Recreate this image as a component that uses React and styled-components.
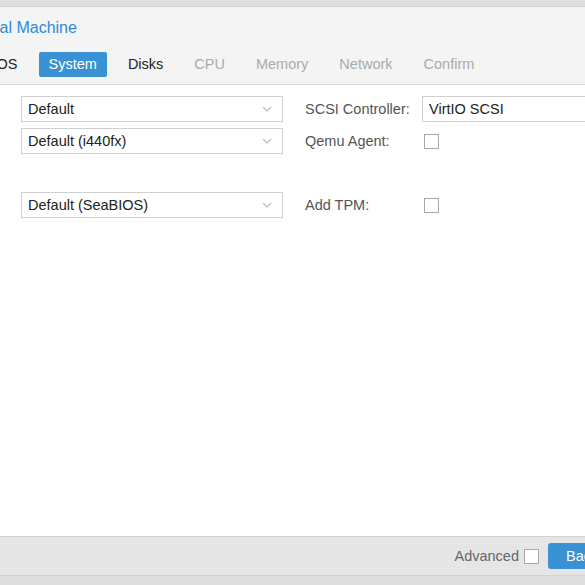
import React from "react"
import styled, { createGlobalStyle } from "styled-components"

const Global = createGlobalStyle`
    body {
        margin: 0;
        background: #dedede;
        overflow: hidden;
        font-family: "Liberation Sans", Arial, sans-serif;
    }
`;

const Page = styled.div`
    width: 585px;
    height: 585px;
    overflow: hidden;
    padding-top: 6px;
    box-sizing: border-box;
`;

const Window = styled.div`
    margin-left: -110px;
    width: 804px;
    height: 570px;
    box-sizing: border-box;
    display: flex;
    flex-direction: column;
    background: white;
    border-top: 1px solid #d2d2d2;
    border-bottom: 1px solid #d2d2d2;
`;

const Header = styled.div`
    height: 77px;
    background: #f4f4f4;
    border-bottom: 1px solid #d6d6d6;
    display: flex;
    flex-direction: column;
`;

const Title = styled.div`
    padding: 11px 0 0 20px;
    font-size: 16px;
    line-height: 20px;
    color: #2f8bd3;
    white-space: nowrap;
`;

const Tabs = styled.div`
    display: flex;
    gap: 11px;
    margin-top: 14px;
    padding-left: 14px;
`;

const Tab = styled.div`
    height: 25px;
    line-height: 25px;
    padding: 0 10px;
    font-size: 14.5px;
    border-radius: 2px;
    white-space: nowrap;
    color: ${p => p.active ? "white" : p.disabled ? "#ababab" : "#222"};
    background: ${p => p.active ? "#3892d4" : "transparent"};
`;

const Body = styled.div`
    flex: 1;
    display: flex;
    gap: 22px;
    padding: 11px 0 0 10px;
`;

const Column = styled.div`
    display: flex;
    flex-direction: column;
    gap: 6px;
`;

const Row = styled.div`
    height: 26px;
    display: flex;
    align-items: center;
`;

const Label = styled.div`
    width: ${p => p.width}px;
    font-size: 14.5px;
    color: #555;
    white-space: nowrap;
`;

const Field = styled.div`
    width: ${p => p.width}px;
    height: 26px;
    box-sizing: border-box;
    border: 1px solid #d0d0d0;
    background: white;
    display: flex;
    align-items: center;
    justify-content: space-between;
    padding: 0 10px 0 6px;
    font-size: 14.5px;
    color: #222;
`;

const Check = styled.div`
    width: 15px;
    height: 15px;
    box-sizing: border-box;
    border: 1px solid #a8a8a8;
    background: white;
    margin-left: ${p => p.offset || 0}px;
`;

const Footer = styled.div`
    height: 39px;
    box-sizing: border-box;
    border-top: 1px solid #d2d2d2;
    background: #e6e6e6;
    display: flex;
    align-items: center;
    justify-content: flex-end;
    padding-right: 3px;
    gap: 5px;
`;

const AdvText = styled.div`
    font-size: 14.5px;
    color: #666;
`;

const Button = styled.div`
    width: 67px;
    height: 26px;
    box-sizing: border-box;
    border-radius: 3px;
    background: #3892d4;
    color: white;
    font-size: 14.5px;
    line-height: 26px;
    padding-left: 18px;
    margin-left: 4px;
`;

const Chevron = () => (
    <svg width="10" height="6" viewBox="0 0 10 6">
        <path d="M1 1 L5 5 L9 1" fill="none" stroke="#bdbdbd" strokeWidth="1.2" />
    </svg>
);

const Select = ({ value }) => (
    <Field width={262}>
        <span>{value}</span>
        <Chevron />
    </Field>
);

export default () => (
    <Page>
        <Global />
        <Window>
            <Header>
                <Title>Create: Virtual Machine</Title>
                <Tabs>
                    <Tab>General</Tab>
                    <Tab>OS</Tab>
                    <Tab active>System</Tab>
                    <Tab>Disks</Tab>
                    <Tab disabled>CPU</Tab>
                    <Tab disabled>Memory</Tab>
                    <Tab disabled>Network</Tab>
                    <Tab disabled>Confirm</Tab>
                </Tabs>
            </Header>
            <Body>
                <Column>
                    <Row><Label width={121}>Graphic card:</Label><Select value="Default" /></Row>
                    <Row><Label width={121}>Machine:</Label><Select value="Default (i440fx)" /></Row>
                    <Row><Label width={121}>Firmware</Label></Row>
                    <Row><Label width={121}>BIOS:</Label><Select value="Default (SeaBIOS)" /></Row>
                </Column>
                <Column>
                    <Row>
                        <Label width={117}>SCSI Controller:</Label>
                        <Field width={300}><span>VirtIO SCSI</span><Chevron /></Field>
                    </Row>
                    <Row><Label width={117}>Qemu Agent:</Label><Check offset={2} /></Row>
                    <Row />
                    <Row><Label width={117}>Add TPM:</Label><Check offset={2} /></Row>
                </Column>
            </Body>
            <Footer>
                <AdvText>Advanced</AdvText>
                <Check />
                <Button>Back</Button>
                <Button>Next</Button>
            </Footer>
        </Window>
    </Page>
)
